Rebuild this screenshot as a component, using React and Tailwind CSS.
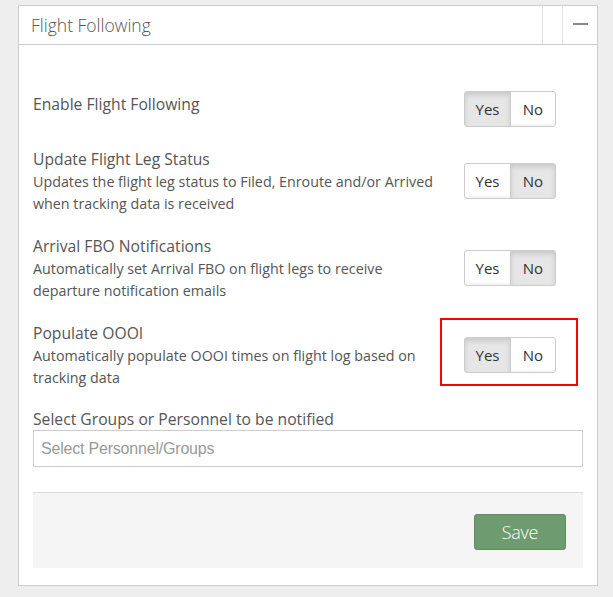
import { useState } from 'react'

const ROWS = [
  { key: 'enable', label: 'Enable Flight Following', value: true },
  {
    key: 'legStatus',
    label: 'Update Flight Leg Status',
    desc: ['Updates the flight leg status to Filed, Enroute and/or Arrived', 'when tracking data is received'],
    value: false,
  },
  {
    key: 'arrivalFbo',
    label: 'Arrival FBO Notifications',
    desc: ['Automatically set Arrival FBO on flight legs to receive', 'departure notification emails'],
    value: false,
  },
  {
    key: 'oooi',
    label: 'Populate OOOI',
    desc: ['Automatically populate OOOI times on flight log based on', 'tracking data'],
    value: true,
    highlight: true,
  },
]

function YesNo({ value, onChange }) {
  const base = 'h-[36px] border border-[#cccccc] text-[15px] text-[#333333]'
  const on = 'bg-[#e6e6e6] border-[#adadad] shadow-[inset_0_3px_5px_rgba(0,0,0,0.125)]'
  const off = 'bg-white shadow-[inset_0_-2px_0_rgba(0,0,0,0.04)]'
  return (
    <div className="flex shrink-0">
      <button
        type="button"
        onClick={() => onChange(true)}
        className={`${base} w-[47px] rounded-l-[3px] ${value ? on : off}`}
      >
        Yes
      </button>
      <button
        type="button"
        onClick={() => onChange(false)}
        className={`${base} -ml-px w-[46px] rounded-r-[3px] ${!value ? on : off}`}
      >
        No
      </button>
    </div>
  )
}

export default function App() {
  const [values, setValues] = useState(() => Object.fromEntries(ROWS.map((r) => [r.key, r.value])))

  return (
    <div className="min-h-[597px] bg-[#eeeeee] pt-[5px] pl-[18px] pr-[15px] font-['Open_Sans',sans-serif] text-[#555555]">
      <div className="w-[580px] border border-[#cccccc] bg-white">
        {/* header */}
        <div className="flex h-[39px] items-stretch border-b border-[#cccccc]">
          <h2 className="flex-1 pl-[12px] pt-[8px] text-[17.5px] font-light leading-[22px] text-[#555555]">
            Flight Following
          </h2>
          <div className="w-[20px] border-l border-[#e2e2e2]" />
          <button type="button" className="flex w-[35px] items-center justify-center border-l border-[#e2e2e2]">
            <span className="mt-[-2px] block h-[2px] w-[15px] bg-[#888888]" />
          </button>
        </div>

        {/* body */}
        <div className="px-[14px] pb-[17px] pt-[46px]">
          {ROWS.map((row, i) => (
            <div
              key={row.key}
              className={`relative flex items-center justify-between pr-[27px] ${i === 0 ? 'mb-[20px]' : 'mb-[19px]'}`}
            >
              <div className={i === 0 ? 'pb-[10px]' : ''}>
                <div className="text-[15.7px] leading-[24px] text-[#555555]">{row.label}</div>
                {row.desc?.map((line) => (
                  <div key={line} className="text-[14.3px] leading-[22px] text-[#555555]">
                    {line}
                  </div>
                ))}
              </div>
              <YesNo value={values[row.key]} onChange={(v) => setValues((s) => ({ ...s, [row.key]: v }))} />
              {row.highlight ? (
                <div className="pointer-events-none absolute right-[5px] top-[-3px] h-[68px] w-[138px] border-2 border-[#ff0000]" />
              ) : null}
            </div>
          ))}

          <label className="mt-[18px] block text-[15.7px] leading-[22px] text-[#555555]">
            Select Groups or Personnel to be notified
          </label>
          <div className="flex h-[37px] items-center border border-[#cccccc] px-[7px] font-['Liberation_Sans',sans-serif] text-[16px] tracking-[-0.2px] text-[#999999]">
            Select Personnel/Groups
          </div>

          <div className="mt-[25px] flex justify-end border-t border-[#dddddd] bg-[#f5f5f5] pb-[18px] pr-[17px] pt-[21px]">
            <button
              type="button"
              className="h-[36px] w-[92px] rounded-[3px] border border-[#5f8a60] bg-[#6e9b70] text-[18px] font-light tracking-[-0.3px] text-white"
            >
              Save
            </button>
          </div>
        </div>
      </div>
    </div>
  )
}
